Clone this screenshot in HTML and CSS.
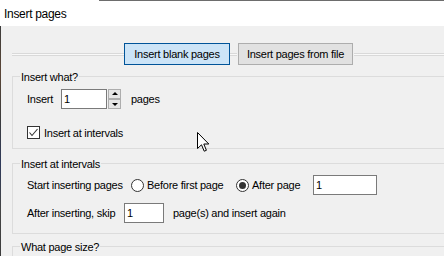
FILE: index.html
```html
<!DOCTYPE html>
<html lang="en">
<head>
  <meta charset="UTF-8">
  <title>Insert pages</title>
  <link rel="stylesheet" href="styles.css">
</head>
<body>
  <div class="titlebar">
    <span class="title">Insert pages</span>
  </div>

  <div class="main">
    <div class="edge"></div>

    <div class="dialog">
      <!-- mode buttons on an etched line -->
      <div class="tabs">
        <span class="rule rule-lead"></span>
        <button class="tab tab-blank tab-active">Insert blank pages</button>
        <span class="rule rule-gap"></span>
        <button class="tab tab-file">Insert pages from file</button>
        <span class="rule rule-fill"></span>
      </div>

      <!-- Insert what? -->
      <div class="group g-what">
        <div class="caption">Insert what?</div>
        <div class="row r-count">
          <span class="lbl w-insert">Insert</span>
          <span class="field f-count">1</span>
          <span class="spin">
            <span class="spin-btn spin-up"></span>
            <span class="spin-btn spin-down"></span>
          </span>
          <span class="lbl after-spin">pages</span>
        </div>
        <div class="row r-check">
          <span class="check">
            <svg width="11" height="11" viewBox="0 0 11 11"><polyline points="1.5,5.5 4,8.5 9.5,2" fill="none" stroke="#333" stroke-width="1.1"/></svg>
          </span>
          <span class="lbl check-lbl">Insert at intervals</span>
        </div>
      </div>

      <!-- Insert at intervals -->
      <div class="group g-interval">
        <div class="caption">Insert at intervals</div>
        <div class="row r-start">
          <span class="lbl w-start">Start inserting pages</span>
          <span class="option opt-before">
            <span class="radio"></span>
            <span class="lbl">Before first page</span>
          </span>
          <span class="option opt-after">
            <span class="radio radio-on"></span>
            <span class="lbl">After page</span>
          </span>
          <span class="field f-after">1</span>
        </div>
        <div class="row r-skip">
          <span class="lbl w-skip">After inserting, skip</span>
          <span class="field f-skip">1</span>
          <span class="lbl after-skip">page(s) and insert again</span>
        </div>
      </div>

      <!-- What page size? -->
      <div class="group g-size">
        <div class="caption">What page size?</div>
        <div class="row r-empty"></div>
      </div>
    </div>
  </div>

  <svg class="cursor" width="13" height="21" viewBox="0 0 13 21">
    <path d="M0.5 0.5 L0.5 16.5 L4.5 12.8 L7.2 19.2 L9.4 18.3 L6.8 12 L11.8 12 Z" fill="#fff" stroke="#000" stroke-width="1" stroke-linejoin="miter"/>
  </svg>
</body>
</html>
```

FILE: styles.css
```css
body {
  margin: 0;
  background: #f0f0f0;
  font-family: "Liberation Sans", Arial, sans-serif;
  font-size: 11px;
  letter-spacing: -0.25px;
  color: #000;
  overflow: hidden;
  height: 256px;
}

/* ===== Title bar ===== */
.titlebar {
  height: 26px;
  background: #fff linear-gradient(#6d6d6d, #6d6d6d) no-repeat 99px 0 / 100% 1px;
  display: flex;
  align-items: center;
  padding-left: 4px;
}

.title {
  font-size: 12px;
  letter-spacing: -0.3px;
  padding-top: 1px;
}

/* ===== Body ===== */
.main {
  display: flex;
  height: 230px;
}

.edge {
  width: 1px;
  background: linear-gradient(#3c3c3c, #5b4636 20%, #3c3c3c 40%, #2f3a5a 60%, #444 80%, #3c3c3c);
}

.dialog {
  flex: 1;
  padding-left: 11px;
  overflow: hidden;
}

/* ===== Mode buttons ===== */
.tabs {
  display: flex;
  align-items: center;
  margin-top: 17px;
  height: 22px;
}

.rule {
  height: 1px;
  border-top: 1px solid #d9d9d9;
  border-bottom: 1px solid #d9d9d9;
  background: #f9f9f9;
}

.rule-lead { width: 112px; }
.rule-gap { width: 7px; margin: 0 1px 0 0; }
.rule-fill { flex: 1; margin-left: 1px; }

.tab {
  box-sizing: border-box;
  height: 22px;
  padding: 0;
  font: inherit;
  letter-spacing: inherit;
  color: #000;
  background: #e1e1e1;
  border: 1px solid #adadad;
}

.tab-blank { width: 106px; }
.tab-file { width: 115px; }

.tab-active {
  background: #cce4f7;
  border-color: #005499;
}

/* ===== Group boxes ===== */
.group {
  border: 1px solid #dcdcdc;
  margin-right: -20px;
}

.caption {
  width: fit-content;
  margin: -6px 0 0 7px;
  padding: 0 1px;
  line-height: 13px;
  background: #f0f0f0;
}

.row {
  display: flex;
  align-items: center;
  padding-left: 14px;
}

.g-what { margin-top: 11px; padding-bottom: 9px; }
.g-interval { margin-top: 14px; padding-bottom: 10px; }
.g-size { margin-top: 12px; height: 40px; }

.r-count { margin-top: 5px; height: 20px; }
.r-check { margin-top: 17px; height: 13px; }
.r-start { margin-top: 4px; height: 20px; }
.r-skip { margin-top: 8px; height: 20px; }

.lbl { white-space: nowrap; }

.w-insert { width: 34px; }
.w-start { width: 104px; }
.w-skip { width: 97px; }
.after-spin { margin-left: 10px; }
.after-skip { margin-left: 9px; }
.check-lbl { margin-left: 4px; }

/* ===== Inputs ===== */
.field {
  box-sizing: border-box;
  height: 20px;
  border: 1px solid #7a7a7a;
  background: #fff;
  padding-left: 2px;
  line-height: 18px;
}

.f-count { width: 46px; }
.f-after { width: 64px; }
.f-skip { width: 40px; }

.spin {
  display: flex;
  flex-direction: column;
  width: 13px;
  height: 20px;
  margin-left: 1px;
}

.spin-btn {
  position: relative;
  box-sizing: border-box;
  height: 10px;
  border: 1px solid #adadad;
  background: #e5e5e5;
}

.spin-btn::after {
  content: "";
  position: absolute;
  left: 3px;
  top: 2px;
  border-left: 3px solid transparent;
  border-right: 3px solid transparent;
}

.spin-up::after { border-bottom: 3px solid #000; }
.spin-down::after { border-top: 3px solid #000; top: 3px; }

.check {
  box-sizing: border-box;
  width: 13px;
  height: 13px;
  border: 1px solid #333;
  background: #fff;
  display: flex;
}

/* ===== Radios ===== */
.option {
  display: flex;
  align-items: center;
  gap: 3px;
}

.opt-before { width: 105px; }
.opt-after { width: 77px; }

.radio {
  box-sizing: border-box;
  width: 13px;
  height: 13px;
  border: 1px solid #333;
  border-radius: 50%;
  background: #fff;
  display: flex;
  align-items: center;
  justify-content: center;
}

.radio-on::after {
  content: "";
  width: 7px;
  height: 7px;
  border-radius: 50%;
  background: #333;
}

/* ===== Mouse pointer over the dialog ===== */
.cursor {
  position: absolute;
  left: 197px;
  top: 132px;
}
```
